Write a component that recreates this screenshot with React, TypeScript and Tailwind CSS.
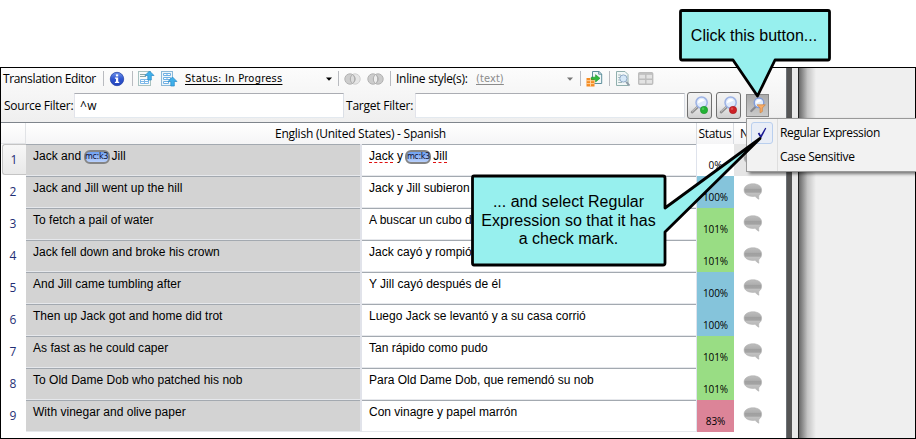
import React from "react";

type Row = { n: number; source: React.ReactNode; target: React.ReactNode; pct: string; color: string };

const Tag = () => (
  <span className="relative -top-[7px] -ml-px mr-[2px] inline-flex h-[14px] w-[26px] items-center justify-center rounded-[6px] border-2 border-[#858585] bg-linear-to-b from-[#6fa0f0] to-[#b9d0fb] align-[-6px] font-['DejaVu_Sans',sans-serif] text-[8px] leading-none tracking-[-0.35px] text-[#101030]">
    mc:k3
  </span>
);

const misspelt = "underline decoration-[#e01010] decoration-dashed decoration-1 underline-offset-[2px] [text-decoration-skip-ink:none]";

const BLUE = "bg-[#85c4db]";
const GREEN = "bg-[#99dd84]";
const ROSE = "bg-[#dc8498]";

const rows: Row[] = [
  { n: 1, source: <>Jack and <Tag />Jill</>, target: <><span className={misspelt}>Jack</span> y <Tag /><span className={misspelt}>Jill</span></>, pct: "0%", color: "bg-white" },
  { n: 2, source: "Jack and Jill went up the hill", target: "Jack y Jill subieron", pct: "100%", color: BLUE },
  { n: 3, source: "To fetch a pail of water", target: "A buscar un cubo d", pct: "101%", color: GREEN },
  { n: 4, source: "Jack fell down and broke his crown", target: "Jack cayó y rompió", pct: "101%", color: GREEN },
  { n: 5, source: "And Jill came tumbling after", target: "Y Jill cayó después de él", pct: "100%", color: BLUE },
  { n: 6, source: "Then up Jack got and home did trot", target: "Luego Jack se levantó y a su casa corrió", pct: "100%", color: BLUE },
  { n: 7, source: "As fast as he could caper", target: "Tan rápido como pudo", pct: "101%", color: GREEN },
  { n: 8, source: "To Old Dame Dob who patched his nob", target: "Para Old Dame Dob, que remendó su nob", pct: "101%", color: GREEN },
  { n: 9, source: "With vinegar and olive paper", target: "Con vinagre y papel marrón", pct: "83%", color: ROSE },
];

const Sep = () => <i className="block h-[15px] w-px shrink-0 bg-[#b9bbc0]" />;

const Caret = ({ className }: { className: string }) => (
  <svg width="6" height="4" viewBox="0 0 6 4" className={`shrink-0 ${className}`}>
    <path d="M0 0.5H6L3 3.7Z" fill="currentColor" />
  </svg>
);

const InfoIcon = () => (
  <svg width="16" height="16" viewBox="0 0 16 16" className="ml-[5px] shrink-0">
    <defs>
      <linearGradient id="info" x1="0" y1="0" x2="0" y2="1">
        <stop offset="0" stopColor="#6f94ec" />
        <stop offset=".5" stopColor="#2f55cf" />
        <stop offset="1" stopColor="#2343bb" />
      </linearGradient>
    </defs>
    <circle cx="8" cy="8" r="6.7" fill="url(#info)" stroke="#2745a8" strokeWidth=".8" />
    <rect x="6.9" y="3.4" width="2.3" height="2" fill="#fff" />
    <path d="M5.9 6.5H9.2V10.7H10.2V12H5.9V10.7H7V7.8H5.9Z" fill="#fff" />
  </svg>
);

const ListUpIcon = () => (
  <svg width="17" height="17" viewBox="0 0 17 17" className="ml-[5px] shrink-0">
    <rect x=".5" y="1.500" width="12" height="14" fill="#f6fafa" stroke="#a9c2c0" />
    <path d="M2 4.5H8M2 6.5H8" stroke="#8aa5a5" />
    <path d="M2.500 9.5H10.5V13.500H2.500ZM6.5 9.5V13.500M2.500 11.500H10.5" fill="#fff" stroke="#7db8e8" />
    <path d="M11.5 1L16 5.5H13.300V10H9.800V5.500H7Z" fill="#3fb0ea" stroke="#2587c6" strokeWidth=".7" />
  </svg>
);

const GridUpIcon = () => (
  <svg width="17" height="17" viewBox="0 0 17 17" className="ml-[6px] shrink-0">
    <rect x=".5" y="1.500" width="11" height="14" fill="#eef6fa" stroke="#8ab8d8" />
    <path d="M2.500 3.500H9.500V5.500H2.500ZM2.500 7.500H9.500V9.500H2.500ZM2.500 11.500H7.500V13.500H2.500ZM6 3.500V5.500M6 7.500V9.500" fill="#fff" stroke="#6fb0e4" />
    <path d="M11.500 7L16 11.500H13.300V16H9.800V11.500H7Z" fill="#3fb0ea" stroke="#2587c6" strokeWidth=".7" />
  </svg>
);

const RingsIcon = ({ join, className }: { join: boolean; className: string }) => (
  <svg width="17" height="12" viewBox="0 0 17 12" className={`shrink-0 ${className}`}>
    <circle cx="11" cy="6" r="5.2" fill={join ? "#cbcbcb" : "#e6e6e6"} stroke={join ? "#b3b3b3" : "#d0d0d0"} />
    <circle cx="6" cy="6" r="5.2" fill="#cdcdcd" stroke="#b3b3b3" />
    <path d="M8.5 1.5C11.5 4 11.5 8 8.5 10.5C5.6 8 5.6 4 8.5 1.5Z" fill={join ? "#eee" : "#dcdcdc"} stroke="#aaa" />
  </svg>
);

const ExportIcon = () => (
  <svg width="17" height="16" viewBox="0 0 17 16" className="ml-[5px] shrink-0">
    <path d="M6.5.5H13L15.7 3V12.5H6.5Z" fill="#f1f7f8" stroke="#5e8f9c" />
    <path d="M12.7.5V3.2H15.7" fill="none" stroke="#5e8f9c" />
    <path d="M.5 7H8.5V15.5H.5Z" fill="#f58b22" />
    <path d="M.5 9.7H8.5M.5 12.6H8.5M4.5 7V15.5" stroke="#ffd9a8" strokeWidth=".9" />
    <path d="M5.3 6.2H9.6V3.7L14 7.3L9.6 11V8.6H5.3Z" fill="#2fba3e" stroke="#159127" strokeWidth=".6" />
  </svg>
);

const PreviewIcon = () => (
  <svg width="15" height="16" viewBox="0 0 15 16" className="ml-[6px] shrink-0">
    <path d="M.5.5H9L12 3.5V14.5H.5Z" fill="#f1f7f7" stroke="#91b0ae" />
    <path d="M2.2 4H5M2.2 6.5H4M2.2 9H4M2.2 11.5H6" stroke="#a0b6b8" />
    <circle cx="7.4" cy="7.5" r="3.6" fill="#d5e8f7" stroke="#8fa9c6" />
    <path d="M10.2 10.8L13.5 14.6" stroke="#8c9aa6" strokeWidth="1.8" />
  </svg>
);

const GridIcon = () => (
  <svg width="16" height="13" viewBox="0 0 16 13" className="ml-[7px] shrink-0">
    <rect x=".7" y=".7" width="14" height="11.6" rx="1" fill="#e3e3e3" stroke="#bdbdbd" strokeWidth="1.4" />
    <path d="M1 2H15" stroke="#bdbdbd" strokeWidth="1.6" />
    <path d="M7.8 2V12M1 7.3H15" stroke="#bdbdbd" strokeWidth="1.4" />
  </svg>
);

const Magnifier = ({ light, dot, dark }: { light: string; dot: string; dark: string }) => (
  <svg width="19" height="19" viewBox="0 0 19 19">
    <path d="M2 16.2L7.6 11" stroke="#8f8f8f" strokeWidth="2.6" strokeLinecap="round" />
    <path d="M2 15.5L7.3 10.6" stroke="#cfcfcf" strokeWidth="1" />
    <circle cx="11.6" cy="6.6" r="5.6" fill="#dfeafb" stroke="#9db2e4" strokeWidth="1.5" />
    <path d="M8 7.2A3.8 3.8 0 0 1 14.8 4.6Z" fill="#fff" />
    <circle cx="14" cy="14" r="3.7" fill={dot} stroke={dark} strokeWidth=".5" />
    <circle cx="13" cy="12.8" r="1.3" fill={light} opacity=".5" />
  </svg>
);

const FilterIcon = () => (
  <svg width="16" height="17" viewBox="0 0 16 17">
    <path d="M1.3 14L5.6 9.8" stroke="#87878c" strokeWidth="2.2" strokeLinecap="round" />
    <circle cx="9" cy="5.8" r="4.8" fill="#e0ebfa" stroke="#819cdb" strokeWidth="1.4" />
    <path d="M6 6.4A3.2 3.2 0 0 1 11.5 3.8Z" fill="#fff" />
    <path d="M7 7.8H15.3L12.3 11V14.6L10.1 15.8V11Z" fill="#f8ac66" stroke="#cf843f" strokeWidth=".7" />
  </svg>
);

const Bubble = () => (
  <svg width="20" height="17" viewBox="0 0 20 17">
    <defs>
      <linearGradient id="bubble" x1="0" y1="0" x2="0" y2="1">
        <stop offset="0" stopColor="#bdbdbd" />
        <stop offset=".3" stopColor="#afafaf" />
        <stop offset=".36" stopColor="#a0a0a0" />
        <stop offset=".54" stopColor="#a3a3a3" />
        <stop offset=".62" stopColor="#c0c0c0" />
        <stop offset="1" stopColor="#b5b5b5" />
      </linearGradient>
    </defs>
    <path d="M10 .8C15 .8 18.6 3.2 18.6 7C18.6 9.6 17.6 11.2 15.9 12.2C15.5 13.5 15.6 14.8 15.9 16.2C14 15.4 12.9 14.4 12.3 13.3C6 14 1.1 11.8 1.1 7C1.1 3.2 4.8 .8 10 .8Z" fill="url(#bubble)" stroke="#b0b0b0" strokeWidth=".6" />
  </svg>
);

const toolButton = "flex h-[27px] w-[25px] shrink-0 items-center justify-center rounded-[3px] border border-[#707070] bg-linear-to-b from-[#f3f3f3] via-[#e9e9e9] to-[#cfcfcf]";

export default function App() {
  return (
    <div className="relative h-[439px] w-[916px] overflow-hidden bg-white pt-[67px] font-['Open_Sans','Noto_Sans',sans-serif] text-[12px] text-black">
      <div className="flex h-[372px] w-[916px] overflow-hidden border border-black bg-white">
        <main className="flex w-[785px] shrink-0 flex-col">
          <div className="flex h-[54px] shrink-0 flex-col bg-linear-to-b from-[#fcfcfc] to-[#efefef]">
            <div className="flex h-[21px] items-center whitespace-nowrap">
              <span className="ml-[2px] w-[100px] tracking-[-0.36px]">Translation Editor</span>
              <Sep />
              <InfoIcon />
              <i className="w-[7px]" />
              <Sep />
              <ListUpIcon />
              <GridUpIcon />
              <span className="ml-[7px] w-[141px] pt-[2px] font-['DejaVu_Sans_Condensed','DejaVu_Sans',sans-serif] text-[11px] tracking-[0.26px] underline underline-offset-2">Status: In Progress</span>
              <Caret className="text-black" />
              <i className="w-[6px]" />
              <Sep />
              <RingsIcon join={false} className="ml-[5px]" />
              <RingsIcon join className="ml-[6px]" />
              <i className="w-[6px]" />
              <Sep />
              <span className="ml-[5px] w-[80px] tracking-[-0.26px]">Inline style(s):</span>
              <span className="w-[91px] pt-[2px] font-['DejaVu_Sans_Condensed','DejaVu_Sans',sans-serif] text-[11px] tracking-[0.1px] text-[#8b8b8b] underline underline-offset-2">(text)</span>
              <Caret className="text-[#777]" />
              <i className="w-[7px]" />
              <Sep />
              <ExportIcon />
              <i className="w-[6px]" />
              <Sep />
              <PreviewIcon />
              <GridIcon />
            </div>
            <div className="flex h-[33px] items-center whitespace-nowrap">
              <span className="ml-[3px] w-[70px] tracking-[-0.26px]">Source Filter:</span>
              <div className="flex h-[25px] w-[270px] items-center border border-t-[#abadb3] border-r-[#dbdfe6] border-b-[#e3e9ef] border-l-[#e2e3ea] bg-white pl-[5px] tracking-[0.4px]">^w</div>
              <span className="ml-[2px] w-[69px] tracking-[-0.22px]">Target Filter:</span>
              <div className="h-[25px] w-[270px] border border-t-[#abadb3] border-r-[#dbdfe6] border-b-[#e3e9ef] border-l-[#e2e3ea] bg-white" />
              <div className={`ml-[2px] ${toolButton}`}><Magnifier dot="#22b234" light="#6fe07b" dark="#168a25" /></div>
              <div className={`ml-[4px] ${toolButton}`}><Magnifier dot="#cc2026" light="#ee7a7a" dark="#9c1418" /></div>
              <div className="ml-[5px] flex h-[23px] w-[23px] shrink-0 items-center justify-center border border-[#888] bg-linear-to-b from-[#aaa] to-[#cacaca]"><FilterIcon /></div>
            </div>
          </div>
          <div className="h-px shrink-0 bg-[#7f858c]" />
          <div className="flex h-[21px] shrink-0 items-center bg-linear-to-b from-white to-[#f5f5f6]">
            <div className="h-full w-[25px] border-r border-b border-[#e1e3e6]" />
            <div className="h-full w-[671px] border-r border-[#d9dce1] pr-px text-center leading-[21px]"><span className="tracking-[-0.24px]">English (United States) - Spanish</span></div>
            <div className="h-full w-[37px] border-r border-[#d9dce1] text-center leading-[21px] tracking-[-0.3px]">Status</div>
            <div className="h-full pl-[6px] leading-[21px]">N</div>
          </div>
          {rows.map((r) => (
            <div key={r.n} className="flex h-[32px] shrink-0">
              <div className={r.n === 1 ? "ml-px h-[31px] w-[24px] rounded-l-[3px] border border-r-0 border-[#c4c4c4] bg-linear-to-b from-[#f7f7f7] to-[#e9e9e9] pr-px text-center leading-[29px] text-[#1f2f75]" : "w-[25px] pr-px text-center leading-[31px] text-[#1f2f75]"}>{r.n}</div>
              <div className="w-[334px] border-t border-b border-t-[#a3a9b0] border-b-[#e6e8ec] bg-[#d3d3d3] pl-[7px] font-['Liberation_Sans',Arial,sans-serif] leading-[22px] tracking-[0.02px] whitespace-nowrap">{r.source}</div>
              <div className="w-[2px] bg-[#e1e3ea]" />
              <div className="w-[334px] overflow-hidden border-t border-b border-t-[#a3a9b0] border-b-[#e6e8ec] pl-[7px] font-['Liberation_Sans',Arial,sans-serif] leading-[22px] whitespace-nowrap">{r.target}</div>
              <div className="w-px bg-[#dfe3ec]" />
              <div className={`w-[37px] pt-[14px] text-center text-[10px] leading-[15px] tracking-[-0.1px] ${r.color}`}>{r.pct}</div>
              <div className={r.n === 1 ? "w-[52px] bg-[#e5e5e5] pt-[7px] pl-[9px]" : "w-[52px] pt-[7px] pl-[9px]"}><Bubble /></div>
            </div>
          ))}
        </main>
        <div className="w-[6px] shrink-0 border-l border-[#6d7277] bg-[#555]" />
        <div className="w-[6px] shrink-0 bg-[#e9e9e9]" />
        <div className="w-px shrink-0 bg-[#222]" />
        <div className="w-[17px] shrink-0 bg-linear-to-r from-[#686868] via-[#c4c4c4] to-[#efefef]" />
        <div className="flex-1 bg-[#efefef]" />
      </div>

      <div className="absolute top-[118px] left-[746px] flex h-[54px] w-[172px] border border-[#999] bg-[#f2f2f2] shadow-[3px_2px_3px_rgba(0,0,0,0.5)]">
        <div className="w-[31px] border-r border-[#dedede] pt-[3px] pl-[4px]">
          <div className="flex h-[22px] w-[22px] items-center justify-center rounded-[3px] border border-[#b9cfee] bg-[#e9eef7]">
            <svg width="10" height="12" viewBox="0 0 10 12">
              <path d="M.8 6.5L2.3 5.5L3.8 8.3L8.2 .8L9.3 1.2L4.3 11H3.5Z" fill="#1b1b93" />
            </svg>
          </div>
        </div>
        <div className="pt-[2px] pl-[2px] leading-[24px] whitespace-nowrap">
          <div className="tracking-[-0.38px]">Regular Expression</div>
          <div className="tracking-[-0.33px]">Case Sensitive</div>
        </div>
      </div>

      <svg className="absolute top-0 left-0" width="916" height="439" viewBox="0 0 916 439">
        <g fill="#97f0ee" stroke="#000" strokeWidth="2.8" strokeLinejoin="round">
          <path d="M682 10.5H828Q829.5 10.5 829.5 12V58Q829.5 60 828 60H775L757.5 96L733 60H682Q680.5 60 680.5 58V12Q680.5 10.5 682 10.5Z" />
          <path d="M474 176H663Q665 176 665 178V208L760 138.500L665 232V263Q665 265 663 265H474Q472.500 265 472.500 263V178Q472.500 176 474 176Z" />
        </g>
      </svg>
      <div className="absolute top-[26px] left-[679px] w-[150px] text-center font-['Liberation_Sans',Arial,sans-serif] text-[16px] leading-[20px] whitespace-nowrap">Click this button...</div>
      <div className="absolute top-[193px] left-[472px] w-[193px] text-center font-['Liberation_Sans',Arial,sans-serif] text-[16px] leading-[18.5px] whitespace-nowrap">
        ... and select Regular<br />Expression so that it has<br />a check mark.
      </div>
    </div>
  );
}
